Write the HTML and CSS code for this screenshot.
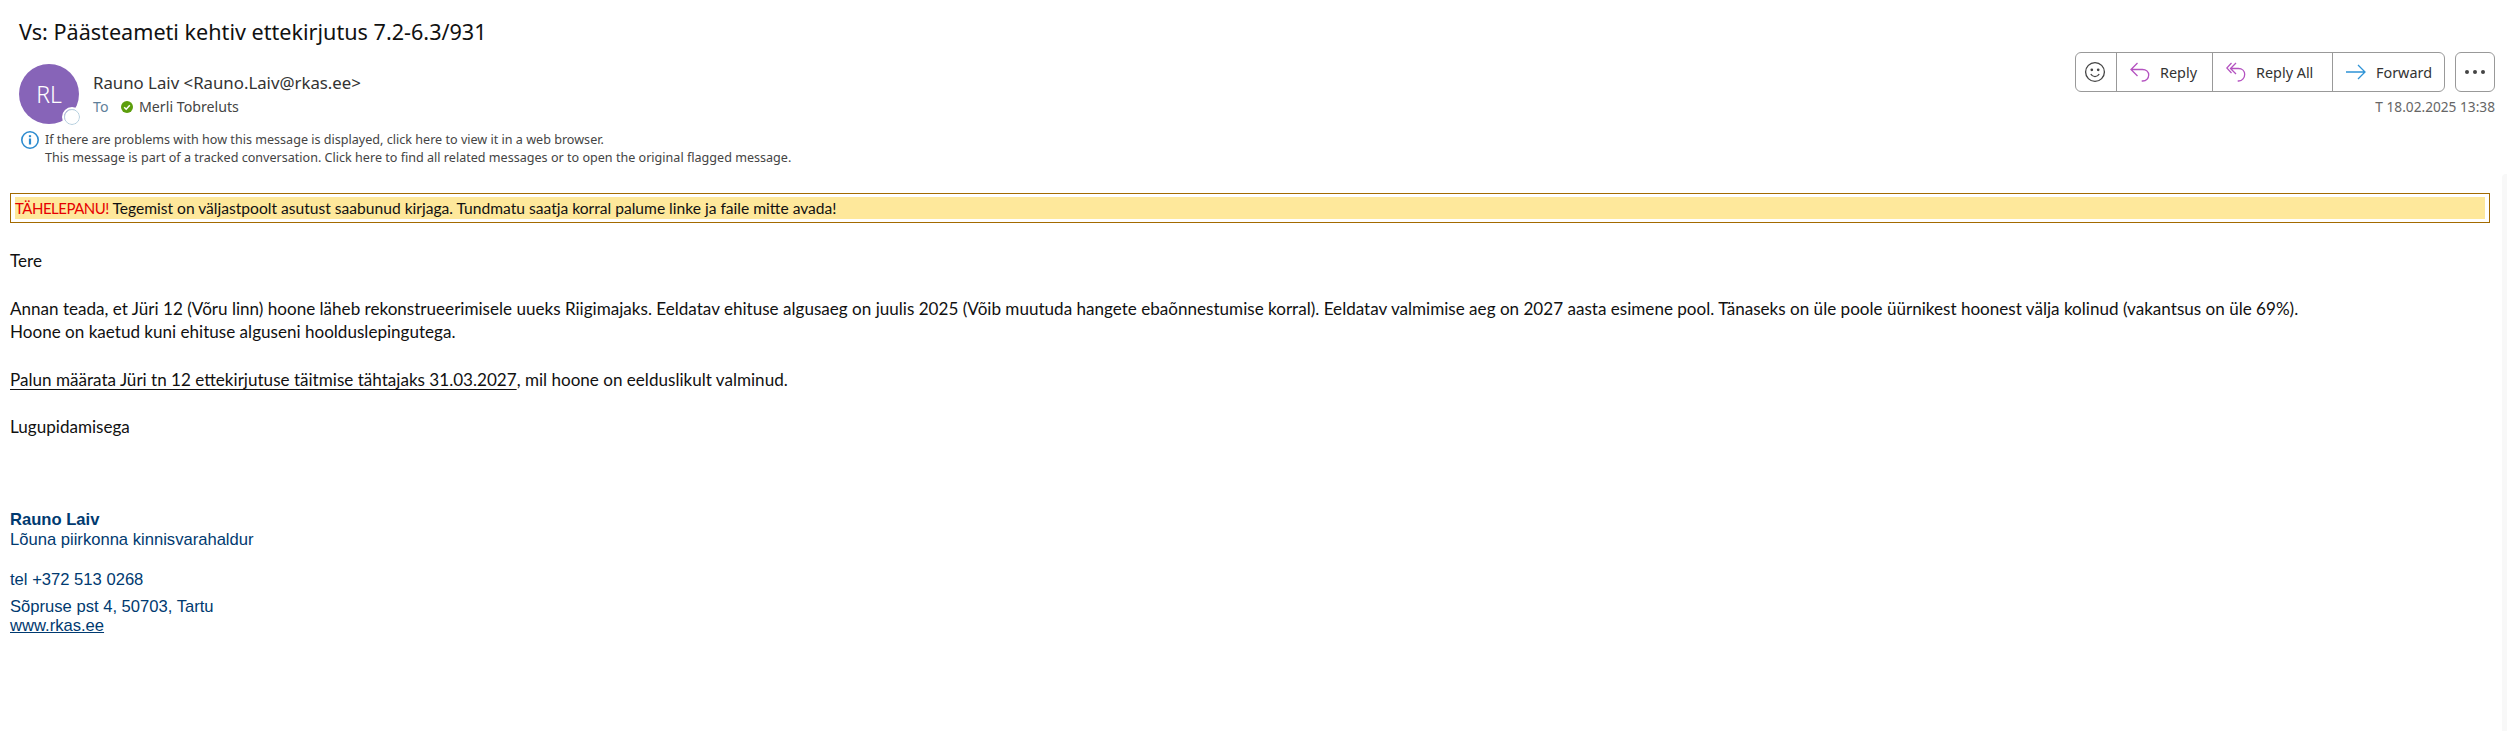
FILE: index.html
```html
<!DOCTYPE html>
<html lang="en">
<head>
    <meta charset="UTF-8">
    <meta name="viewport" content="width=device-width, initial-scale=1.0">
    <title>Vs: Päästeameti kehtiv ettekirjutus 7.2-6.3/931</title>
    <link rel="stylesheet" href="styles.css">
</head>
<body>
    <div class="scroll-track"></div>
    <header class="msg-header">
        <h1 class="subject">Vs: Päästeameti kehtiv ettekirjutus 7.2-6.3/931</h1>
        <div class="meta-row">
            <div class="sender">
                <div class="avatar">RL<span class="presence"></span></div>
                <div class="sender-text">
                    <div class="from">Rauno Laiv &lt;Rauno.Laiv@rkas.ee&gt;</div>
                    <div class="to">
                        <span class="to-label">To</span>
                        <svg class="check" width="12" height="12" viewBox="0 0 12 12"><circle cx="6" cy="6" r="6" fill="#5c9e0c"/><path d="M3.2 6.2l2 2 3.6-4" fill="none" stroke="#fff" stroke-width="1.5"/></svg>
                        <span class="to-name">Merli Tobreluts</span>
                    </div>
                </div>
            </div>
            <div class="actions">
                <div class="buttons">
                    <div class="btn-group">
                        <div class="btn btn-smile">
                            <svg width="22" height="22" viewBox="0 0 22 22" fill="none" stroke="#444" stroke-width="1.3"><circle cx="11" cy="11" r="9.4"/><circle cx="7.8" cy="8.8" r=".7" fill="#444"/><circle cx="14.2" cy="8.8" r=".7" fill="#444"/><path d="M6.8 13c1 1.8 2.5 2.6 4.2 2.6s3.2-.8 4.2-2.6"/></svg>
                        </div>
                        <div class="btn btn-reply">
                            <svg width="20" height="20" viewBox="0 0 20 20" fill="none" stroke="#b452c0" stroke-width="1.3"><path d="M7.5 1L1 7.5l6.5 6.5M1 7.5h11.5c3.6 0 6.2 2.4 6.2 5.6 0 3.2-2.4 5.9-6 5.9h-1"/></svg>
                            <span>Reply</span>
                        </div>
                        <div class="btn btn-reply-all">
                            <svg width="20" height="20" viewBox="0 0 20 20" fill="none" stroke="#b452c0" stroke-width="1.3"><path d="M5.5 1L.8 6l4.7 5M10 1L4.5 6.5l5.5 5.5M4.5 6.5h8c3.6 0 6.2 2.4 6.2 5.8 0 3.4-2.4 6.7-6 6.7h-1"/></svg>
                            <span>Reply All</span>
                        </div>
                        <div class="btn btn-forward">
                            <svg width="20" height="16" viewBox="0 0 20 16" fill="none" stroke="#2e93d6" stroke-width="1.3"><path d="M0 8h19M12 1l7 7-7 7"/></svg>
                            <span>Forward</span>
                        </div>
                    </div>
                    <div class="btn-more"><i></i><i></i><i></i></div>
                </div>
                <div class="date">T 18.02.2025 13:38</div>
            </div>
        </div>
        <div class="infobar">
            <svg class="info-icon" width="18" height="18" viewBox="0 0 18 18"><circle cx="9" cy="9" r="8.2" fill="#fff" stroke="#2e8ccf" stroke-width="1.6"/><rect x="7.9" y="7.5" width="2.2" height="6" fill="#2e8ccf"/><rect x="7.9" y="4.2" width="2.2" height="2" fill="#2e8ccf"/></svg>
            <div class="info-text">
                <div>If there are problems with how this message is displayed, click here to view it in a web browser.</div>
                <div>This message is part of a tracked conversation. Click here to find all related messages or to open the original flagged message.</div>
            </div>
        </div>
    </header>

    <main class="msg-body">
        <div class="warning"><p><span class="warn-red">TÄHELEPANU!</span> Tegemist on väljastpoolt asutust saabunud kirjaga. Tundmatu saatja korral palume linke ja faile mitte avada!</p></div>

        <div class="content">
            <p>Tere</p>
            <p>&nbsp;</p>
            <p>Annan teada, et Jüri 12 (Võru linn) hoone läheb rekonstrueerimisele uueks Riigimajaks. Eeldatav ehituse algusaeg on juulis 2025 (Võib muutuda hangete ebaõnnestumise korral). Eeldatav valmimise aeg on 2027 aasta esimene pool. Tänaseks on üle poole üürnikest hoonest välja kolinud (vakantsus on üle 69%).</p>
            <p>Hoone on kaetud kuni ehituse alguseni hoolduslepingutega.</p>
            <p>&nbsp;</p>
            <p><u>Palun määrata Jüri tn 12 ettekirjutuse täitmise tähtajaks 31.03.2027</u>, mil hoone on eelduslikult valminud.</p>
            <p>&nbsp;</p>
            <p>Lugupidamisega</p>
        </div>

        <div class="signature">
            <div class="sig-name">Rauno Laiv</div>
            <div>Lõuna piirkonna kinnisvarahaldur</div>
            <div class="sig-tel">tel +372 513 0268</div>
            <div class="sig-addr">Sõpruse pst 4, 50703, Tartu</div>
            <div class="sig-web"><a href="#">www.rkas.ee</a></div>
        </div>
    </main>
</body>
</html>
```

FILE: styles.css
```css
body {
    margin: 0;
    background: #fff;
    font-family: "Noto Sans", "Open Sans", sans-serif;
    color: #000;
}

.scroll-track {
    position: fixed;
    top: 174px;
    right: 0;
    bottom: 0;
    width: 5px;
    border-top-left-radius: 4px;
    background: #f8f8f8;
}

/* header */
.msg-header {
    padding: 0 12px 0 19px;
}

.subject {
    margin: 0;
    padding-top: 17px;
    height: 47px;
    box-sizing: border-box;
    font-size: 21.6px;
    line-height: 30px;
    font-weight: 400;
    color: #111;
}

.meta-row {
    display: flex;
    justify-content: space-between;
    height: 84px;
}

.sender {
    display: flex;
    padding-top: 17px;
}

.avatar {
    position: relative;
    width: 60px;
    height: 60px;
    border-radius: 50%;
    background: #8764b8;
    color: #fff;
    font-size: 23px;
    font-weight: 300;
    line-height: 60px;
    text-align: center;
}

.presence {
    position: absolute;
    right: -1px;
    bottom: -1px;
    width: 14px;
    height: 14px;
    border: 1.5px solid #b3cede;
    border-radius: 50%;
    background: #fff;
    outline: 2px solid #fff;
}

.sender-text {
    margin-left: 14px;
    padding-top: 7px;
}

.from {
    font-size: 16.8px;
    line-height: 24px;
    color: #333;
}

.to {
    display: flex;
    align-items: center;
    font-size: 14.2px;
    line-height: 24px;
    color: #444;
}

.to-label {
    width: 28px;
    color: #5f7f9a;
}

.check {
    margin-right: 6px;
}

/* buttons on the right */
.actions {
    padding-top: 5px;
}

.buttons {
    display: flex;
    gap: 10px;
}

.btn-group {
    display: flex;
    height: 40px;
    box-sizing: border-box;
    border: 1.5px solid #999;
    border-radius: 6px;
}

.btn {
    display: flex;
    align-items: center;
    gap: 10px;
    box-sizing: border-box;
    border-left: 1.5px solid #999;
    padding-left: 13px;
    font-size: 14.4px;
    color: #333;
}

.btn-smile {
    width: 40px;
    padding-left: 8px;
    border-left: 0;
}

.btn-reply {
    width: 96px;
}

.btn-reply-all {
    width: 120px;
}

.btn-forward {
    width: 112px;
}

.btn-more {
    display: flex;
    align-items: center;
    justify-content: center;
    gap: 4px;
    width: 40px;
    height: 40px;
    box-sizing: border-box;
    border: 1.5px solid #999;
    border-radius: 6px;
}

.btn-more i {
    width: 4px;
    height: 4px;
    border-radius: 50%;
    background: #444;
}

.date {
    margin-top: 5px;
    font-size: 13.7px;
    line-height: 20px;
    text-align: right;
    color: #666;
}

.infobar {
    display: flex;
    align-items: flex-start;
    gap: 6px;
    height: 62px;
    padding-left: 2px;
}

.info-icon {
    flex: none;
}

.info-text {
    font-size: 12.58px;
    line-height: 18px;
    color: #444;
}

/* message */
.msg-body {
    padding: 0 10px;
    font-family: Lato, "Liberation Sans", sans-serif;
    font-size: 17.08px;
    color: #111;
}

.warning {
    box-sizing: border-box;
    width: 2480px;
    height: 30px;
    padding: 3px 4px;
    border: 1px solid #a36a00;
    font-size: 15.6px;
}

.warning p {
    margin: 0;
    background: #fee89b;
    line-height: 22px;
}

.warn-red {
    color: #e60000;
    font-size: 15px;
    letter-spacing: -.5px;
}

.content {
    margin-top: 26px;
}

.content p {
    margin: 0;
    line-height: 23.75px;
}

.content u {
    text-underline-offset: 3px;
}

.signature {
    margin-top: 71px;
    font-family: "Liberation Sans", Arial, sans-serif;
    font-size: 16.6px;
    line-height: 20px;
    color: #003a70;
}

.sig-name {
    font-weight: 700;
}

.sig-tel {
    margin-top: 20px;
}

.sig-addr {
    margin-top: 7px;
}

.sig-web {
    margin-top: -1px;
}

.signature a {
    color: inherit;
}
```
